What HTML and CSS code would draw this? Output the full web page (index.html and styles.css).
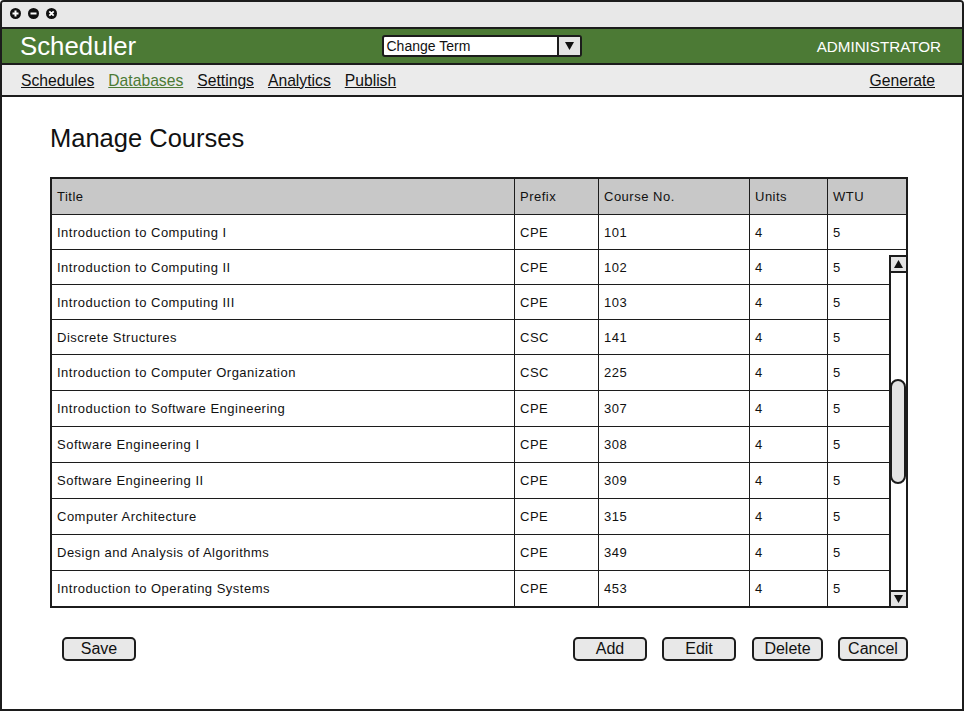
FILE: index.html
```html
<!DOCTYPE html>
<html>
<head>
<meta charset="utf-8">
<link rel="stylesheet" href="styles.css">
</head>
<body>
<div class="window">
  <div class="titlebar">
    <svg class="wbtn" width="11" height="11" viewBox="0 0 11 11"><circle cx="5.5" cy="5.5" r="5.5" fill="#111"/><path d="M5.5 2.5v6M2.5 5.5h6" stroke="#fff" stroke-width="2"/></svg>
    <svg class="wbtn" width="11" height="11" viewBox="0 0 11 11"><circle cx="5.5" cy="5.5" r="5.5" fill="#111"/><path d="M2.5 5.5h6" stroke="#fff" stroke-width="2"/></svg>
    <svg class="wbtn" width="11" height="11" viewBox="0 0 11 11"><circle cx="5.5" cy="5.5" r="5.5" fill="#111"/><path d="M3.3 3.3l4.4 4.4M7.7 3.3l-4.4 4.4" stroke="#fff" stroke-width="1.8"/></svg>
  </div>
  <div class="appbar">
    <div class="brand">Scheduler</div>
    <div class="select">
      <span class="select-text">Change Term</span>
      <span class="select-arrow"><svg width="9" height="8" viewBox="0 0 9 8"><polygon points="0,0 9,0 4.5,8" fill="#111"/></svg></span>
    </div>
    <div class="role">ADMINISTRATOR</div>
  </div>
  <div class="nav">
    <div class="nav-left">
      <a class="link">Schedules</a>
      <a class="link active">Databases</a>
      <a class="link">Settings</a>
      <a class="link">Analytics</a>
      <a class="link">Publish</a>
    </div>
    <a class="link">Generate</a>
  </div>
  <div class="content">
    <h1 class="title">Manage Courses</h1>
    <div class="grid">
      <div class="row head"><div class="c c1">Title</div><div class="c c2">Prefix</div><div class="c c3">Course No.</div><div class="c c4">Units</div><div class="c c5">WTU</div></div>
      <div class="row"><div class="c c1">Introduction to Computing I</div><div class="c c2">CPE</div><div class="c c3">101</div><div class="c c4">4</div><div class="c c5">5</div></div>
      <div class="row"><div class="c c1">Introduction to Computing II</div><div class="c c2">CPE</div><div class="c c3">102</div><div class="c c4">4</div><div class="c c5">5</div></div>
      <div class="row"><div class="c c1">Introduction to Computing III</div><div class="c c2">CPE</div><div class="c c3">103</div><div class="c c4">4</div><div class="c c5">5</div></div>
      <div class="row"><div class="c c1">Discrete Structures</div><div class="c c2">CSC</div><div class="c c3">141</div><div class="c c4">4</div><div class="c c5">5</div></div>
      <div class="row tall"><div class="c c1">Introduction to Computer Organization</div><div class="c c2">CSC</div><div class="c c3">225</div><div class="c c4">4</div><div class="c c5">5</div></div>
      <div class="row tall"><div class="c c1">Introduction to Software Engineering</div><div class="c c2">CPE</div><div class="c c3">307</div><div class="c c4">4</div><div class="c c5">5</div></div>
      <div class="row tall"><div class="c c1">Software Engineering I</div><div class="c c2">CPE</div><div class="c c3">308</div><div class="c c4">4</div><div class="c c5">5</div></div>
      <div class="row tall"><div class="c c1">Software Engineering II</div><div class="c c2">CPE</div><div class="c c3">309</div><div class="c c4">4</div><div class="c c5">5</div></div>
      <div class="row tall"><div class="c c1">Computer Architecture</div><div class="c c2">CPE</div><div class="c c3">315</div><div class="c c4">4</div><div class="c c5">5</div></div>
      <div class="row tall"><div class="c c1">Design and Analysis of Algorithms</div><div class="c c2">CPE</div><div class="c c3">349</div><div class="c c4">4</div><div class="c c5">5</div></div>
      <div class="row tall last"><div class="c c1">Introduction to Operating Systems</div><div class="c c2">CPE</div><div class="c c3">453</div><div class="c c4">4</div><div class="c c5">5</div></div>
      <div class="scrollbar">
        <div class="sb-btn up"><svg width="9" height="8" viewBox="0 0 9 8"><polygon points="0,8 9,8 4.5,0" fill="#111"/></svg></div>
        <div class="sb-track"><div class="sb-thumb"></div></div>
        <div class="sb-btn down"><svg width="9" height="8" viewBox="0 0 9 8"><polygon points="0,0 9,0 4.5,8" fill="#111"/></svg></div>
      </div>
    </div>
    <div class="actions">
      <button class="btn w-save">Save</button>
      <div class="actions-right">
        <button class="btn w-add">Add</button>
        <button class="btn w-edit">Edit</button>
        <button class="btn w-delete">Delete</button>
        <button class="btn w-cancel">Cancel</button>
      </div>
    </div>
  </div>
</div>
</body>
</html>
```

FILE: styles.css
```css
* { box-sizing: border-box; }
html, body { margin: 0; padding: 0; background: #fff; }
body { font-family: "Liberation Sans", Arial, sans-serif; color: #111; }

.window {
  width: 964px;
  height: 711px;
  border: 2px solid #1c1c1c;
  border-radius: 4px 4px 0 0;
  background: #fff;
  display: flex;
  flex-direction: column;
  overflow: hidden;
}

.titlebar {
  height: 27px;
  background: #e8e8e8;
  border-bottom: 2px solid #1c1c1c;
  display: flex;
  align-items: center;
  gap: 7px;
  padding-left: 8px;
  padding-bottom: 2px;
}
.wbtn { display: block; }

.appbar {
  height: 36px;
  background: #4c7a35;
  border-bottom: 2px solid #1c1c1c;
  display: grid;
  grid-template-columns: 1fr auto 1fr;
  align-items: center;
  padding: 0 21px 0 18px;
  color: #fff;
}
.brand { font-size: 25.8px; line-height: 30px; }
.role { font-size: 15.2px; justify-self: end; padding-top: 1px; }

.select {
  width: 200px;
  height: 22px;
  background: #fff;
  border: 2px solid #1c1c1c;
  border-radius: 3px;
  display: flex;
  align-items: stretch;
  color: #111;
  margin-top: -1px;
  margin-left: 2px;
}
.select-text { flex: 1; font-size: 14px; line-height: 18px; padding-left: 3px; }
.select-arrow {
  width: 23px;
  border-left: 2px solid #1c1c1c;
  background: #e4e4e4;
  display: flex;
  align-items: center;
  justify-content: center;
}

.nav {
  height: 32px;
  background: #ebebeb;
  border-bottom: 2px solid #1c1c1c;
  display: flex;
  justify-content: space-between;
  align-items: center;
  padding: 2px 27px 0 19px;
}
.nav-left { display: flex; gap: 14px; }
.link { font-size: 15.7px; color: #111; text-decoration: underline; }
.link.active { color: #4c7a35; }

.content { padding: 0 54px 0 48px; }
.title {
  margin: 26px 0 24px;
  font-size: 25.5px;
  font-weight: normal;
  line-height: 30px;
  color: #111;
}

.grid {
  position: relative;
  width: 858px;
  border: 2px solid #1c1c1c;
  font-size: 13px;
  letter-spacing: 0.5px;
}
.row {
  display: flex;
  height: 35px;
  border-bottom: 1px solid #1c1c1c;
}
.row.tall { height: 36px; }
.row.last { border-bottom: none; height: 35px; }
.row.head { background: #c8c8c8; height: 36px; }
.c {
  display: flex;
  align-items: center;
  padding-left: 5px;
  border-right: 1px solid #1c1c1c;
  white-space: nowrap;
}
.c1 { width: 463px; }
.c2 { width: 84px; }
.c3 { width: 151px; }
.c4 { width: 78px; }
.c5 { flex: 1; border-right: none; }

.scrollbar {
  position: absolute;
  right: 0;
  top: 76px;
  bottom: 0;
  width: 17px;
  border-left: 2px solid #1c1c1c;
  border-top: 2px solid #1c1c1c;
  background: #fff;
  display: flex;
  flex-direction: column;
}
.sb-btn {
  height: 16px;
  background: #e4e4e4;
  display: flex;
  align-items: center;
  justify-content: center;
}
.sb-btn.up { border-bottom: 2px solid #1c1c1c; }
.sb-btn.down { border-top: 2px solid #1c1c1c; }
.sb-track { flex: 1; position: relative; }
.sb-thumb {
  position: absolute;
  left: -1px;
  right: 0;
  top: 106px;
  height: 105px;
  background: #e4e4e4;
  border: 2px solid #1c1c1c;
  border-radius: 8px;
}

.actions {
  margin-top: 29px;
  display: flex;
  justify-content: space-between;
  padding: 0 0 0 12px;
}
.actions-right { display: flex; }
.btn {
  height: 24px;
  border: 2px solid #1c1c1c;
  border-radius: 5px;
  background: #e8e8e8;
  font-family: "Liberation Sans", Arial, sans-serif;
  font-size: 16px;
  color: #111;
  padding: 0;
  line-height: 18px;
}
.w-save { width: 74px; }
.w-add { width: 74px; margin-right: 15px; }
.w-edit { width: 74px; margin-right: 16px; }
.w-delete { width: 71px; margin-right: 15px; }
.w-cancel { width: 70px; }
```
